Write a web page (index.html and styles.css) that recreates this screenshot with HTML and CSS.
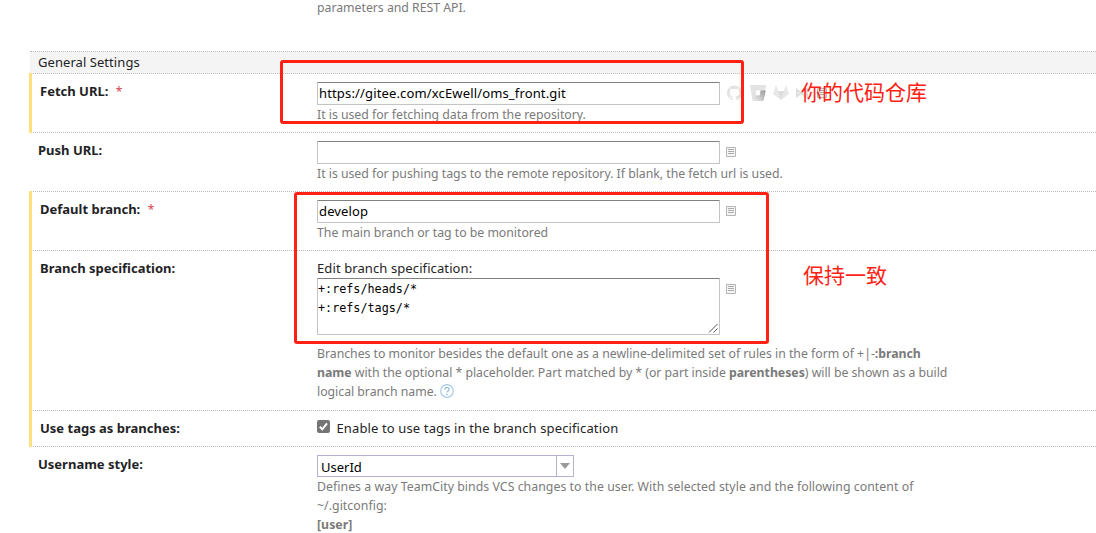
FILE: index.html
```html
<!DOCTYPE html>
<html lang="en">
<head>
<meta charset="utf-8">
<title>VCS Root Settings</title>
<link rel="stylesheet" href="styles.css">
</head>
<body>
<svg class="symbols" width="0" height="0" aria-hidden="true">
  <symbol id="list" viewBox="0 0 10 10"><path d="M.5.5h9v9h-9z" fill="#f5f5f5" stroke="#b5b5b5"/><path d="M2 2.500h6M2 4.500h6M2 6.500h6" stroke="#aaa"/></symbol>
</svg>
<main class="page">
  <div class="intro"><span class="note">parameters and REST API.</span></div>
  <h2 class="section"><span>General Settings</span></h2>
  <div class="row marked">
    <div class="label">Fetch URL: <span class="star">*</span></div>
    <div class="field">
      <div class="control"><div class="input"><span class="url">https://gitee.com/xcEwell/oms_front.git</span></div>
        <div class="services">
          <svg width="15" height="16" viewBox="0 0 16 16"><path fill="#e3e3e3" d="M8 0C3.600 0 0 3.600 0 8c0 3.500 2.300 6.500 5.500 7.600.400.100.500-.200.500-.400v-1.400c-2.200.500-2.700-1-2.700-1-.400-.900-.900-1.200-.900-1.200-.700-.500.100-.500.100-.500.800.100 1.200.800 1.200.800.700 1.200 1.900.900 2.300.700.100-.500.300-.900.500-1.100-1.800-.200-3.600-.900-3.600-4 0-.900.300-1.600.800-2.100-.100-.200-.400-1 .100-2.100 0 0 .700-.200 2.200.800a7.600 7.600 0 0 1 4 0c1.500-1 2.200-.800 2.200-.800.400 1.100.200 1.900.100 2.100.500.600.800 1.300.800 2.100 0 3.100-1.900 3.700-3.700 3.900.300.400.600.900.600 1.600v2.200c0 .200.100.500.600.400A8 8 0 0 0 8 0z"/></svg>
          <svg class="bitbucket" width="16" height="16" viewBox="0 0 16 16"><defs><linearGradient id="fade" x1="1" x2=".2" y1=".2" y2=".9"><stop stop-color="#a0a0a0"/><stop offset="1" stop-color="#e3e3e3"/></linearGradient></defs><path fill="#e3e3e3" d="M0 0h16l-2.600 16H2.600z"/><path fill="#fff" d="M5.500 5.500h5l-.8 5H6.300z"/><path fill="url(#fade)" d="M15.800 5.500h-5.300l-.8 5H6.300L3 16h10.400z"/></svg>
          <svg class="gitlab" width="16" height="15" viewBox="0 0 16 15"><path fill="#e7e7e7" d="m8 15-8-6L3 0l2.200 6h5.600L13 0l3 9z"/><path fill="#dcdcdc" d="m8 15-2.800-9h5.600z"/></svg>
          <svg class="vs" width="13" height="12" viewBox="0 0 13 12"><path fill="none" stroke="#dedede" stroke-width="2" d="m1 3 10 7V2L1 9z"/></svg>
          <svg class="list" width="10" height="10"><use href="#list"/></svg>
        </div>
      </div>
      <div class="note">It is used for fetching data from the repository.</div>
    </div>
  </div>
  <div class="row">
    <div class="label">Push URL:</div>
    <div class="field">
      <div class="control"><div class="input"></div><svg class="list" width="10" height="10"><use href="#list"/></svg></div>
      <div class="note">It is used for pushing tags to the remote repository. If blank, the fetch url is used.</div>
    </div>
  </div>
  <div class="row marked">
    <div class="label">Default branch: <span class="star">*</span></div>
    <div class="field">
      <div class="control"><div class="input">develop</div><svg class="list" width="10" height="10"><use href="#list"/></svg></div>
      <div class="note">The main branch or tag to be monitored</div>
    </div>
  </div>
  <div class="row marked">
    <div class="label">Branch specification:</div>
    <div class="field">
      <div class="caption">Edit branch specification:</div>
      <div class="control"><div class="area">+:refs/heads/*<br>+:refs/tags/*<svg class="grip" width="10" height="10" viewBox="0 0 10 10"><path d="M1 9.500 9.500 1M5.500 9.500l4-4" fill="none" stroke="#555"/></svg></div><svg class="list" width="10" height="10"><use href="#list"/></svg></div>
      <div class="note spec">Branches to monitor besides the default one as a newline-delimited set of rules in the form of +|-<b>:branch</b><br><b>name</b> with the optional * placeholder. Part matched by * (or part inside <b>parentheses</b>) will be shown as a build<br>logical branch name. <svg class="help" width="14" height="14" viewBox="0 0 14 14"><circle cx="7" cy="7" r="6.300" fill="none" stroke="#a9cbe8" stroke-width="1.200"/><path d="M4.900 5.500c0-2.800 4.300-2.600 4.200 0C9 6.900 7 7 7 8.600" fill="none" stroke="#8fb9df" stroke-width="1.200"/><circle cx="7" cy="10.500" r=".8" fill="#8fb9df"/></svg></div>
    </div>
  </div>
  <div class="row marked">
    <div class="label">Use tags as branches:</div>
    <div class="field check">
      <svg width="13" height="13" viewBox="0 0 13 13"><rect width="13" height="13" rx="2" fill="#757575"/><path d="m2.800 6.800 2.500 2.500 4.700-6" fill="none" stroke="#fff" stroke-width="2"/></svg>
      <span>Enable to use tags in the branch specification</span>
    </div>
  </div>
  <div class="row last">
    <div class="label">Username style:</div>
    <div class="field">
      <div class="select"><span>UserId</span><i class="drop"><svg width="10" height="6" viewBox="0 0 10 6"><path d="M0 0h10L5 6z" fill="#999"/></svg></i></div>
      <div class="note style-note">Defines a way TeamCity binds VCS changes to the user. With selected style and the following content of<br>~/.gitconfig:<br><b>[user]</b></div>
    </div>
  </div>
  <div class="frame frame-url"></div>
  <div class="frame frame-branch"></div>
  <div class="remark remark-url">你的代码仓库</div>
  <div class="remark remark-branch">保持一致</div>
</main>
</body>
</html>
```

FILE: styles.css
```css
* { box-sizing: border-box; }
body {
  margin: 0;
  background: #fff;
  color: #1f2326;
  font: 13px/19px "Noto Sans", "Noto Sans CJK SC", sans-serif;
}
.symbols { position: absolute; }
.page {
  position: relative;
  height: 533px;
  padding-left: 30px;
  overflow: hidden;
  white-space: nowrap;
}
.intro { height: 51px; padding-left: 287px; line-height: 15px; }
.section {
  height: 23px;
  margin: 0;
  padding: 1px 8px;
  border-top: 1px dotted #bbb;
  border-bottom: 1px dotted #bbb;
  background: #f4f4f4;
  font-size: 13px;
  font-weight: 400;
  letter-spacing: .06px;
}
.row {
  position: relative;
  display: grid;
  grid-template-columns: 279px 1fr;
  padding: 8px 0 8px 8px;
  border-bottom: 1px dotted #bbb;
}
.row.last { border-bottom: 0; }
.marked::before {
  content: "";
  position: absolute;
  left: -1px;
  top: -1px;
  bottom: -1px;
  width: 3px;
  background: #ffe07a;
}
.label { font-weight: 700; }
.marked .label { padding-left: 2px; }
.star { margin-left: 4px; color: #d9434f; font-size: 12px; font-weight: 400; }
.note { color: #7a7a7a; font-size: 12.3px; letter-spacing: -.025px; }
.style-note { letter-spacing: .045px; }
.control { display: flex; }
.input, .area {
  width: 403px;
  border: 1px solid #c4c4c4;
  border-top-color: #808080;
  border-radius: 1px;
  color: #000;
  background: #fff;
}
.input { height: 23px; padding: 1px; letter-spacing: .15px; }
.caption { letter-spacing: .1px; }
.list { margin: 6px 0 0 6px; }
.services { display: flex; margin-left: 7px; padding-top: 3px; }
.bitbucket, .gitlab { margin-left: 7.500px; }
.vs { margin: 2px 0 0 7px; }
.services .list { margin: 3px 0 0 8px; }
.area {
  position: relative;
  height: 57px;
  padding-top: 1px;
  font: 11.750px/19px "DejaVu Sans Mono", monospace;
}
.grip { position: absolute; right: 1px; bottom: 1px; }
.spec { padding: 9px 0 1px; }
.help { vertical-align: -2px; }
.check { display: flex; letter-spacing: .13px; }
.check svg { margin: 1px 6.500px 0 0; }
.select {
  display: flex;
  justify-content: space-between;
  width: 257px;
  height: 22px;
  padding-left: 3px;
  border: 1px solid #b3b3d1;
  line-height: 22px;
  color: #000;
}
.drop {
  display: flex;
  align-items: center;
  justify-content: center;
  width: 17px;
  border-left: 1px solid #b3b3d1;
}
.frame { position: absolute; border: 3px solid #ff2114; border-radius: 3px; }
.frame-url { left: 280px; top: 60px; width: 464px; height: 64px; }
.frame-branch { left: 294px; top: 192px; width: 475px; height: 152px; }
.remark {
  position: absolute;
  color: #ff2114;
  font: 400 21px/30px "Noto Sans CJK SC", sans-serif;
}
.remark-url { left: 801px; top: 76px; }
.remark-branch { left: 803px; top: 259px; }
```
